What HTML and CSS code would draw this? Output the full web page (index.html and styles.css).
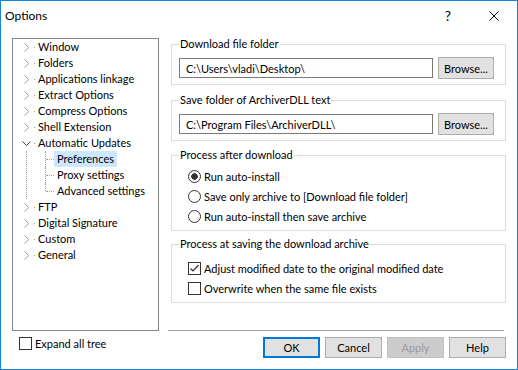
FILE: index.html
```html
<!DOCTYPE html>
<html lang="en">
<head>
    <meta charset="UTF-8">
    <title>Options</title>
    <link rel="stylesheet" href="styles.css">
</head>
<body>
    <div class="window">
        <div class="titlebar">
            <span class="title">Options</span>
            <span class="cap-btn help">?</span>
            <span class="cap-btn">
                <svg width="10" height="10" viewBox="0 0 10 10"><path d="M0.5 0.5 L9.5 9.5 M9.5 0.5 L0.5 9.5" stroke="#000" stroke-width="1" fill="none"/></svg>
            </span>
        </div>

        <div class="content">
            <!-- дерево разделов -->
            <div class="left">
                <ul class="tree">
                    <li><div class="row"><span class="twisty"><svg width="9" height="9"><path d="M2.5 0.5 L6.5 4.5 L2.5 8.5" class="chev"/></svg></span><span class="stub"></span><span class="label">Window</span></div></li>
                    <li><div class="row"><span class="twisty"><svg width="9" height="9"><path d="M2.5 0.5 L6.5 4.5 L2.5 8.5" class="chev"/></svg></span><span class="stub"></span><span class="label">Folders</span></div></li>
                    <li><div class="row"><span class="twisty"><svg width="9" height="9"><path d="M2.5 0.5 L6.5 4.5 L2.5 8.5" class="chev"/></svg></span><span class="stub"></span><span class="label">Applications linkage</span></div></li>
                    <li><div class="row"><span class="twisty"><svg width="9" height="9"><path d="M2.5 0.5 L6.5 4.5 L2.5 8.5" class="chev"/></svg></span><span class="stub"></span><span class="label">Extract Options</span></div></li>
                    <li><div class="row"><span class="twisty"><svg width="9" height="9"><path d="M2.5 0.5 L6.5 4.5 L2.5 8.5" class="chev"/></svg></span><span class="stub"></span><span class="label">Compress Options</span></div></li>
                    <li><div class="row"><span class="twisty"><svg width="9" height="9"><path d="M2.5 0.5 L6.5 4.5 L2.5 8.5" class="chev"/></svg></span><span class="stub"></span><span class="label">Shell Extension</span></div></li>
                    <li>
                        <div class="row"><span class="twisty"><svg width="9" height="9"><path d="M0.5 2.5 L4.5 6.5 L8.5 2.5" class="chev open"/></svg></span><span class="stub"></span><span class="label">Automatic Updates</span></div>
                        <ul class="kids">
                            <li><div class="row"><span class="hline"></span><span class="label selected">Preferences</span></div></li>
                            <li><div class="row"><span class="hline"></span><span class="label">Proxy settings</span></div></li>
                            <li><div class="row"><span class="hline"></span><span class="label">Advanced settings</span></div></li>
                        </ul>
                    </li>
                    <li><div class="row"><span class="twisty"><svg width="9" height="9"><path d="M2.5 0.5 L6.5 4.5 L2.5 8.5" class="chev"/></svg></span><span class="stub"></span><span class="label">FTP</span></div></li>
                    <li><div class="row"><span class="twisty"><svg width="9" height="9"><path d="M2.5 0.5 L6.5 4.5 L2.5 8.5" class="chev"/></svg></span><span class="stub"></span><span class="label">Digital Signature</span></div></li>
                    <li><div class="row"><span class="twisty"><svg width="9" height="9"><path d="M2.5 0.5 L6.5 4.5 L2.5 8.5" class="chev"/></svg></span><span class="stub"></span><span class="label">Custom</span></div></li>
                    <li><div class="row"><span class="twisty"><svg width="9" height="9"><path d="M2.5 0.5 L6.5 4.5 L2.5 8.5" class="chev"/></svg></span><span class="stub"></span><span class="label">General</span></div></li>
                </ul>
                <div class="opt expand"><span class="box"></span>Expand all tree</div>
            </div>

            <!-- настройки -->
            <div class="right">
                <div class="groups">
                    <fieldset class="g1">
                        <legend>Download file folder</legend>
                        <div class="path-row">
                            <input class="path" type="text" value="C:\Users\vladi\Desktop\" readonly>
                            <button class="btn browse">Browse...</button>
                        </div>
                    </fieldset>

                    <fieldset class="g2">
                        <legend>Save folder of ArchiverDLL text</legend>
                        <div class="path-row">
                            <input class="path" type="text" value="C:\Program Files\ArchiverDLL\" readonly>
                            <button class="btn browse">Browse...</button>
                        </div>
                    </fieldset>

                    <fieldset class="g3">
                        <legend>Process after download</legend>
                        <div class="opt"><span class="radio on"></span>Run auto-install</div>
                        <div class="opt"><span class="radio"></span>Save only archive to [Download file folder]</div>
                        <div class="opt"><span class="radio"></span>Run auto-install then save archive</div>
                    </fieldset>

                    <fieldset class="g4">
                        <legend>Process at saving the download archive</legend>
                        <div class="opt"><span class="box"><svg width="11" height="11" viewBox="0 0 11 11"><path d="M1.5 5.5 L4 8 L9.5 2" stroke="#333" stroke-width="1.2" fill="none"/></svg></span>Adjust modified date to the original modified date</div>
                        <div class="opt"><span class="box"></span>Overwrite when the same file exists</div>
                    </fieldset>
                </div>
                <div class="sep"></div>
                <div class="buttons">
                    <button class="btn default">OK</button>
                    <button class="btn">Cancel</button>
                    <button class="btn" disabled>Apply</button>
                    <button class="btn">Help</button>
                </div>
            </div>
        </div>
    </div>
</body>
</html>
```

FILE: styles.css
```css
body {
    margin: 0;
    font-family: "Segoe UI", Lato, "Noto Sans", sans-serif;
    font-size: 11px;
    color: #000;
    background: #fff;
}

.window {
    width: 518px;
    height: 370px;
    box-sizing: border-box;
    border: 1px solid #1883d7;
    display: flex;
    flex-direction: column;
}

.titlebar {
    height: 29px;
    display: flex;
    align-items: center;
    padding-left: 4px;
    flex: none;
    font-size: 12px;
}

.title {
    flex: 1;
}

.cap-btn {
    width: 46px;
    height: 29px;
    display: flex;
    align-items: center;
    justify-content: center;
}

.help {
    font-size: 14px;
}

.content {
    display: flex;
    flex: 1;
}

/* дерево */
.left {
    margin-left: 11px;
    width: 147px;
    padding-top: 8px;
}

.tree {
    height: 293px;
    box-sizing: border-box;
    border: 1px solid #828790;
    margin: 0;
    padding: 0;
    list-style: none;
}

.row {
    display: flex;
    align-items: center;
    height: 16px;
}

.twisty {
    width: 16px;
    margin-left: 5px;
    display: flex;
    justify-content: center;
}

.twisty svg {
    display: block;
}

.chev {
    fill: none;
    stroke: #a6a6a6;
    stroke-width: 1;
}

.chev.open {
    stroke: #404040;
}

.stub {
    width: 1px;
    height: 1px;
    background: #a0a0a0;
}

.label {
    margin-left: 1px;
    padding: 0 2px;
    line-height: 16px;
    white-space: nowrap;
}

.kids {
    list-style: none;
    margin: 0 0 0 13px;
    padding: 0;
    border-left: 1px dotted #a0a0a0;
}

.kids li {
    position: relative;
    padding-left: 19px;
}

.kids li::before {
    content: '';
    position: absolute;
    left: 18px;
    top: 0;
    bottom: 0;
    border-left: 1px dotted #a0a0a0;
}

.kids li:last-child::before {
    bottom: 8px;
}

.hline {
    width: 8px;
    border-top: 1px dotted #a0a0a0;
}

.kids .label {
    margin-left: 0;
    padding: 0 3px;
}

.label.selected {
    background: #cce8ff;
}

/* правая часть */
.right {
    margin-left: 9px;
    width: 338px;
    display: flex;
    flex-direction: column;
}

.groups {
    height: 300px;
    box-sizing: border-box;
    padding: 6px 0 0 3px;
}

fieldset {
    width: 335px;
    box-sizing: border-box;
    margin: 0;
    min-width: 0;
    border: 1px solid #dcdcdc;
    padding: 5px 10px 5px 7px;
}

legend {
    padding: 0 1px;
    line-height: 16px;
}

.g2 {
    margin-top: 7px;
}

.g3 {
    margin-top: 6px;
    padding-top: 3px;
    padding-bottom: 4px;
}

.g4 {
    margin-top: 5px;
    padding-top: 6px;
    padding-bottom: 4px;
}

.path-row {
    display: flex;
    align-items: center;
    gap: 5px;
    height: 22px;
}

.path {
    width: 254px;
    height: 20px;
    box-sizing: border-box;
    border: 1px solid #7a7a7a;
    padding: 0 0 0 6px;
    margin: 0;
    font: inherit;
    color: #000;
    outline: none;
}

.btn {
    height: 21px;
    width: 57px;
    box-sizing: border-box;
    background: #e1e1e1;
    border: 1px solid #adadad;
    font: inherit;
    color: #000;
    padding: 0;
}

.btn.browse {
    width: 56px;
    height: 22px;
}

.btn.default {
    border: 2px solid #0078d7;
}

.btn[disabled] {
    background: #cccccc;
    border-color: #bfbfbf;
    color: #9a9a9a;
}

.opt {
    display: flex;
    align-items: center;
    height: 20px;
    padding-left: 9px;
    white-space: nowrap;
}

.radio {
    width: 13px;
    height: 13px;
    box-sizing: border-box;
    border: 1px solid #333;
    border-radius: 50%;
    margin-right: 3px;
}

.radio.on {
    background: radial-gradient(circle, #333 0 3px, #fff 3.5px);
}

.box {
    width: 13px;
    height: 13px;
    box-sizing: border-box;
    border: 1px solid #333;
    margin-right: 3px;
    display: flex;
    align-items: center;
    justify-content: center;
}

.box svg {
    display: block;
}

.expand {
    margin-top: 6px;
    padding-left: 7px;
    height: 13px;
}

.sep {
    height: 1px;
    width: 336px;
    background: #a0a0a0;
}

.buttons {
    display: flex;
    justify-content: flex-end;
    gap: 5px;
    margin-top: 6px;
}
```
